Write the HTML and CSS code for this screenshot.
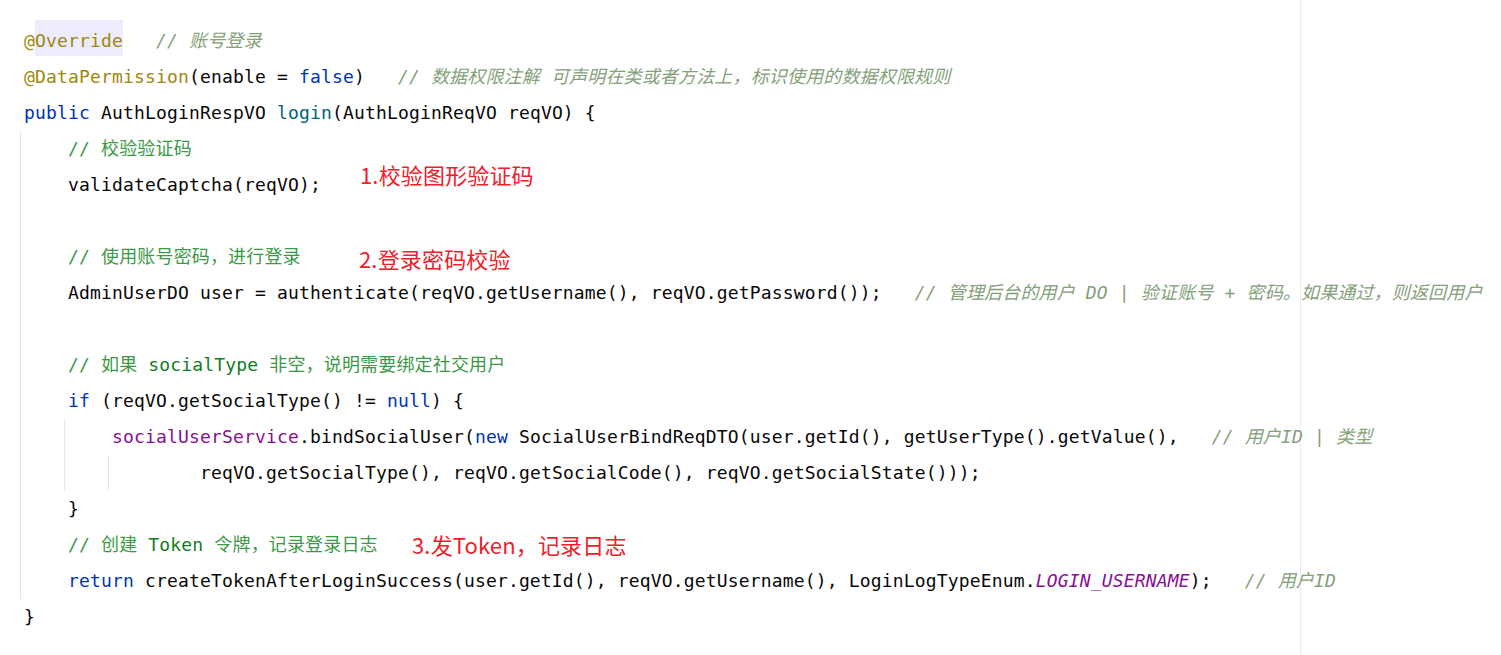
FILE: index.html
```html
<!DOCTYPE html>
<html lang="zh-CN">
<head>
<meta charset="utf-8">
<title>AuthLogin</title>
<link rel="stylesheet" href="styles.css">
</head>
<body>
<div class="editor">
  <div class="line"><span class="ann">@</span><span class="ann hl">Override</span>   <span class="tc">// 账号登录</span></div>
  <div class="line"><span class="ann">@DataPermission</span>(enable = <span class="kw">false</span>)   <span class="tc">// 数据权限注解 可声明在类或者方法上，标识使用的数据权限规则</span></div>
  <div class="line"><span class="kw">public</span> AuthLoginRespVO <span class="decl">login</span>(AuthLoginReqVO reqVO) {</div>
  <div class="block outer">
    <div class="line"><span class="lc">// 校验验证码</span></div>
    <div class="line">validateCaptcha(reqVO);</div>
    <div class="line"> </div>
    <div class="line"><span class="lc">// 使用账号密码，进行登录</span></div>
    <div class="line">AdminUserDO user = authenticate(reqVO.getUsername(), reqVO.getPassword());   <span class="tc">// 管理后台的用户 DO | 验证账号 + 密码。如果通过，则返回用户</span></div>
    <div class="line"> </div>
    <div class="line"><span class="lc">// 如果 <span class="lcode">socialType</span> 非空，说明需要绑定社交用户</span></div>
    <div class="line"><span class="kw">if</span> (reqVO.getSocialType() != <span class="kw">null</span>) {</div>
    <div class="block">
      <div class="line"><span class="field">socialUserService</span>.bindSocialUser(<span class="kw">new</span> SocialUserBindReqDTO(user.getId(), getUserType().getValue(),   <span class="tc">// 用户ID | 类型</span></div>
      <div class="block">
        <div class="line">    reqVO.getSocialType(), reqVO.getSocialCode(), reqVO.getSocialState()));</div>
      </div>
    </div>
    <div class="line">}</div>
    <div class="line"><span class="lc">// 创建 <span class="lcode">Token</span> 令牌，记录登录日志</span></div>
    <div class="line"><span class="kw">return</span> createTokenAfterLoginSuccess(user.getId(), reqVO.getUsername(), LoginLogTypeEnum.<span class="const">LOGIN_USERNAME</span>);   <span class="tc">// 用户ID</span></div>
  </div>
  <div class="line">}</div>

  <div class="note note1">1.校验图形验证码</div>
  <div class="note note2">2.登录密码校验</div>
  <div class="note note3">3.发Token，记录日志</div>
</div>
</body>
</html>
```
FILE: styles.css
```css
html, body {
  margin: 0;
  padding: 0;
  background: #ffffff;
}

.editor {
  position: relative;
  box-sizing: border-box;
  width: 1501px;
  height: 655px;
  overflow: hidden;
  padding: 23px 0 0 24px;
  font-family: "DejaVu Sans Mono", "Noto Sans CJK SC", monospace;
  font-size: 18px;
  letter-spacing: 0.16px;
  color: #080808;
  background: linear-gradient(#ebebeb, #ebebeb) no-repeat 1300px 0 / 1px 100%, #ffffff;
}

.line {
  height: 36px;
  line-height: 36px;
  white-space: pre;
}

.block {
  margin-left: -4px;
  padding-left: 47px;
  border-left: 1px solid #e6e6e6;
}

.ann { color: #9e880d; }
.hl {
  position: relative;
}
.hl::before {
  content: "";
  position: absolute;
  left: 0;
  right: 0;
  top: -3px;
  height: 36px;
  background: #edebfc;
  z-index: -1;
}
.line:first-child {
  position: relative;
  z-index: 0;
}
.hl {
  display: inline-block;
  height: 36px;
  vertical-align: top;
}
.kw { color: #0033b3; }
.decl { color: #00627a; }
.field { color: #871094; }
.const { color: #871094; font-style: italic; }

.tc {
  color: #86a07a;
  font-style: italic;
}

.lc {
  color: #3b9a46;
}
.lcode {
  color: #0f7d24;
}

.note {
  position: absolute;
  font-family: "Noto Sans CJK SC", "Liberation Sans", sans-serif;
  font-size: 22px;
  line-height: 26px;
  color: #f0202b;
  white-space: nowrap;
}
.note1 { left: 360px; top: 161px; }
.note2 { left: 359px; top: 245px; }
.note3 { left: 412px; top: 531px; }
```
